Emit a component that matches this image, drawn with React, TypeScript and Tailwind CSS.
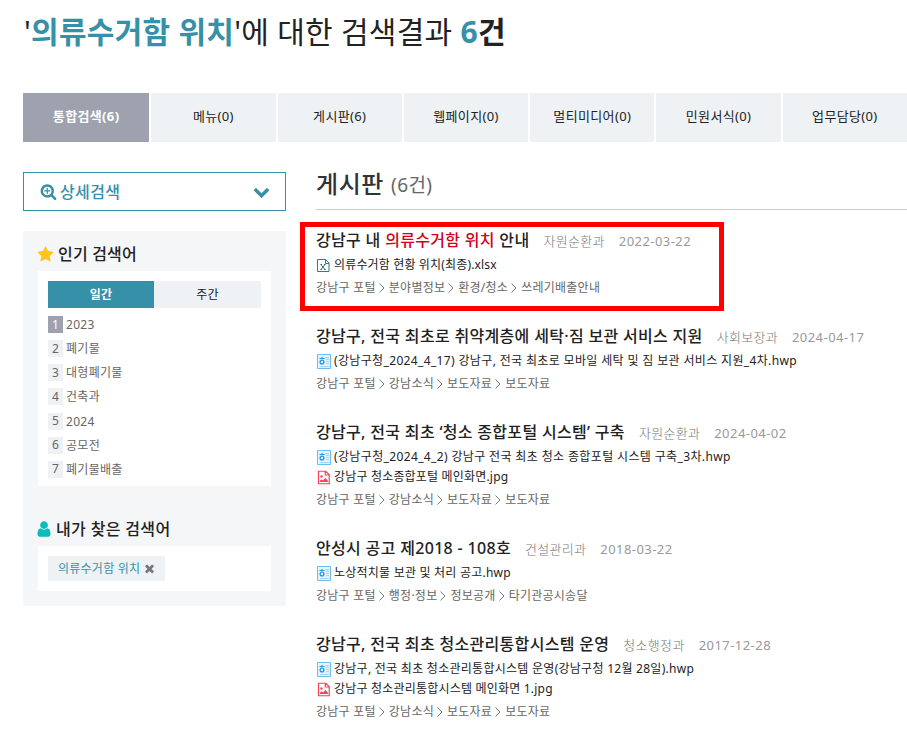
import React, { ReactElement } from 'react'

interface FileProps {
	type: string
	name: string
	tracking: string
}

interface ResultProps {
	title: ReactElement | string
	dept: string
	date: string
	files: FileProps[]
	path: string[]
}

const tabs = ['통합검색(6)', '메뉴(0)', '게시판(6)', '웹페이지(0)', '멀티미디어(0)', '민원서식(0)', '업무담당(0)']

const keywords = ['2023', '폐기물', '대형폐기물', '건축과', '2024', '공모전', '폐기물배출']

const results: ResultProps[] = [
	{
		title: <>강남구 내 <span className="text-[#d0021b]">의류수거함 위치</span> 안내</>,
		dept: '자원순환과',
		date: '2022-03-22',
		files: [{ type: 'xlsx', name: '의류수거함 현황 위치(최종).xlsx', tracking: 'tracking-[0.15px]' }],
		path: ['강남구 포털', '분야별정보', '환경/청소', '쓰레기배출안내'],
	},
	{
		title: '강남구, 전국 최초로 취약계층에 세탁·짐 보관 서비스 지원',
		dept: '사회보장과',
		date: '2024-04-17',
		files: [
			{
				type: 'hwp',
				name: '(강남구청_2024_4_17) 강남구, 전국 최초로 모바일 세탁 및 짐 보관 서비스 지원_4차.hwp',
				tracking: 'tracking-[0.35px]',
			},
		],
		path: ['강남구 포털', '강남소식', '보도자료', '보도자료'],
	},
	{
		title: '강남구, 전국 최초 ‘청소 종합포털 시스템’ 구축',
		dept: '자원순환과',
		date: '2024-04-02',
		files: [
			{
				type: 'hwp',
				name: '(강남구청_2024_4_2) 강남구 전국 최초 청소 종합포털 시스템 구축_3차.hwp',
				tracking: 'tracking-[0.36px]',
			},
			{ type: 'jpg', name: '강남구 청소종합포털 메인화면.jpg', tracking: 'tracking-[0.18px]' },
		],
		path: ['강남구 포털', '강남소식', '보도자료', '보도자료'],
	},
	{
		title: '안성시 공고 제2018 - 108호',
		dept: '건설관리과',
		date: '2018-03-22',
		files: [{ type: 'hwp', name: '노상적치물 보관 및 처리 공고.hwp', tracking: 'tracking-[0.22px]' }],
		path: ['강남구 포털', '행정·정보', '정보공개', '타기관공시송달'],
	},
	{
		title: '강남구, 전국 최초 청소관리통합시스템 운영',
		dept: '청소행정과',
		date: '2017-12-28',
		files: [
			{
				type: 'hwp',
				name: '강남구, 전국 최초 청소관리통합시스템 운영(강남구청 12월 28일).hwp',
				tracking: 'tracking-[0.27px]',
			},
			{ type: 'jpg', name: '강남구 청소관리통합시스템 메인화면 1.jpg', tracking: 'tracking-[0.2px]' },
		],
		path: ['강남구 포털', '강남소식', '보도자료', '보도자료'],
	},
]

const icons = {
	star: 'M1728 647q0 22-26 48l-363 354 86 500q1 7 1 20 0 21-10.500 35.500t-30.500 14.500q-19 0-40-12l-449-236-449 236q-22 12-40 12-21 0-31.500-14.500t-10.500-35.500q0-6 2-20l86-500-364-354q-25-27-25-48 0-37 56-46l502-73 225-455q19-41 49-41t49 41l225 455 502 73q56 9 56 46z',
	user: 'M1536 1399q0 109-62.500 187t-150.500 78h-854q-88 0-150.500-78t-62.500-187q0-85 8.500-160.500t31.500-152 58.500-131 94-89 134.500-34.500q131 128 313 128t313-128q76 0 134.500 34.500t94 89 58.500 131 31.500 152 8.500 160.500zm-256-887q0 159-112.500 271.500t-271.500 112.500-271.500-112.500-112.500-271.500 112.500-271.500 271.500-112.500 271.500 112.500 112.500 271.500z',
	down: 'M1683 808l-742 741q-19 19-45 19t-45-19l-742-741q-19-19-19-45.500t19-45.500l166-165q19-19 45-19t45 19l531 531 531-531q19-19 45-19t45 19l166 165q19 19 19 45.500t-19 45.500z',
	times: 'M1490 1322q0 40-28 68l-136 136q-28 28-68 28t-68-28l-294-294-294 294q-28 28-68 28t-68-28l-136-136q-28-28-28-68t28-68l294-294-294-294q-28-28-28-68t28-68l136-136q28-28 68-28t68 28l294 294 294-294q28-28 68-28t68 28l136 136q28 28 28 68t-28 68l-294 294 294 294q28 28 28 68z',
	searchPlus: 'M1088 800v64q0 13-9.500 22.500t-22.500 9.500h-224v224q0 13-9.500 22.500t-22.500 9.500h-64q-13 0-22.500-9.500t-9.500-22.500v-224h-224q-13 0-22.500-9.500t-9.500-22.500v-64q0-13 9.500-22.500t22.500-9.500h224v-224q0-13 9.500-22.500t22.500-9.500h64q13 0 22.500 9.500t9.500 22.500v224h224q13 0 22.500 9.500t9.500 22.500zm128 32q0-185-131.500-316.500t-316.500-131.500-316.500 131.500-131.500 316.500 131.500 316.500 316.500 131.500 316.500-131.500 131.500-316.500zm512 832q0 53-37.500 90.500t-90.500 37.500q-54 0-90-38l-343-342q-179 124-399 124-143 0-273.500-55.500t-225-150-150-225-55.500-273.500 55.500-273.500 150-225 225-150 273.500-55.500 273.500 55.500 225 150 150 225 55.500 273.500q0 220-124 399l343 343q37 37 37 90z',
}

function Icon({ path, className }: { path: string; className: string }): ReactElement {
	return (
		<svg viewBox="0 0 1792 1792" fill="currentColor" className={`shrink-0 ${className}`}>
			<path d={path} />
		</svg>
	)
}

function FileIcon({ type }: { type: string }): ReactElement {
	if (type === 'xlsx') {
		return (
			<svg viewBox="0 0 14 15" fill="none" className="h-[15px] w-[14px] shrink-0">
				<path d="M.500 1.500h8l3.500 3.500v8.500H.500z M8.500 1.500v4h3.500" stroke="#2f7f74" />
				<path d="M4 6.500l4 5M8 6.500l-4 5M3.500 6.500h1.500M7 6.500h1.500M3.500 11.500h1.500M7 11.500h1.500" stroke="#2d6068" strokeWidth="0.900" />
			</svg>
		)
	}
	if (type === 'hwp') {
		return (
			<svg viewBox="0 0 14 15" fill="none" className="h-[15px] w-[14px] shrink-0">
				<path d="M.5.5h13v14H.5z" fill="#e3f3fc" stroke="#6cbfec" />
				<path d="M8.500 3.500h3.500M9 5.500h3M9 7.500h3M9 9.500h3M3 12.500h9" stroke="#a5d7f4" />
				<path d="M2.500 4.500h5M5 2.800v1.700" stroke="#2a93da" />
				<circle cx="5" cy="8" r="1.900" stroke="#2a93da" strokeWidth="1.300" />
			</svg>
		)
	}
	return (
		<svg viewBox="0 0 14 15" fill="none" className="h-[15px] w-[14px] shrink-0">
			<path d="M1.500 1.250H8.750l3.500 3.500v9H1.500z M8.250 1.500V5h4" stroke="#fa405f" strokeWidth="1.200" />
			<circle cx="4.500" cy="6.500" r="1.200" fill="#fa405f" />
			<path d="M3 12V10.500l1.500-1 1.500 1 2.300-2.500 2.500 2.500V12z" fill="#fa405f" />
		</svg>
	)
}

function Result(props: ResultProps): ReactElement {
	const { title, dept, date, files, path } = props

	return (
		<li className="pb-[22px]">
			<div className="mb-px flex h-7 items-center">
				<h3 className="text-base font-medium tracking-[0.32px] text-[#222]">{title}</h3>
				<span className="ml-[14px] pt-[3px] text-[13px] font-light tracking-[0.3px] text-[#777]">{dept}</span>
				<span className="ml-[14px] pt-[3px] text-[13px] tracking-[0.45px] text-[#999]">{date}</span>
			</div>
			{files.map((file) => (
				<div key={file.name} className="flex h-5 items-center gap-[3px] pl-px text-xs text-[#222]">
					<FileIcon type={file.type} />
					<span className={file.tracking}>{file.name}</span>
				</div>
			))}
			<div className="flex h-[25px] items-center text-xs tracking-[0.25px] text-[#666]">
				{path.map((step, i) => (
					<React.Fragment key={i}>
						{i > 0 && (
							<svg viewBox="0 0 6 10" fill="none" stroke="#777" className="mr-[4px] ml-[3px] h-[10px] w-[6px]">
								<path d="M.5.5L5 5 .5 9.500" />
							</svg>
						)}
						<span>{step}</span>
					</React.Fragment>
				))}
			</div>
		</li>
	)
}

export default function App(): ReactElement {
	return (
		<div className="h-[737px] w-[907px] overflow-hidden bg-white pl-[23px] font-['Noto_Sans','Noto_Sans_CJK_KR',sans-serif] whitespace-nowrap text-[#222]">
			<h1 className="flex h-[93px] items-start pt-[10px] pl-px text-[30px] leading-[44px] tracking-[0.27px]">
				<span className="whitespace-pre">
					'<b className="text-[#3690a7]">의류수거함 위치</b>'에 대한 검색결과 <b className="text-[#3690a7]">6</b><b>건</b>
				</span>
			</h1>

			<ul className="grid h-[49px] grid-cols-7 text-[13px] tracking-[0.35px]">
				{tabs.map((tab, i) => (
					<li
						key={tab}
						className={`flex items-center justify-center pb-px ${i === 0 ? 'bg-[#9ea2ae] font-bold text-white' : 'border-l-2 border-white bg-[#eef2f5]'}`}
					>
						{tab}
					</li>
				))}
			</ul>

			<div className="flex gap-[30px] pt-[30px]">
				<aside className="w-[263px] shrink-0 tracking-[0.2px]">
					<button className="flex h-[39px] w-full items-center border border-[#3690a7] px-4 text-base text-[#3690a7]">
						<Icon path={icons.searchPlus} className="mr-[3px] h-[17px] w-[17px]" />
						<span className="font-medium tracking-[0.4px]">상세검색</span>
						<Icon path={icons.down} className="-mr-px ml-auto h-[17px] w-[17px]" />
					</button>

					<div className="mt-5 h-[375px] bg-[#f4f6f8] px-[15px] pt-2">
						<h2 className="flex h-8 items-center pb-[2px] text-base font-medium">
							<Icon path={icons.star} className="mr-[4px] -ml-px h-[17px] w-[17px] text-[#ffc31f]" />
							인기 검색어
						</h2>
						<div className="h-[215px] bg-white p-[10px] text-xs text-[#666]">
							<div className="grid h-[27px] grid-cols-[106px_107px]">
								<div className="flex items-center justify-center bg-[#3690a7] font-bold text-white">일간</div>
								<div className="flex items-center justify-center bg-[#eef2f5] text-[#222]">주간</div>
							</div>
							<ol className="pt-2">
								{keywords.map((word, i) => (
									<li key={word} className="flex h-[24.150px] items-start">
										<span
											className={`mr-[3px] flex h-[17px] w-[15px] items-center justify-center ${i === 0 ? 'bg-[#9ea2ae] text-white' : 'bg-[#eef2f5]'}`}
										>
											{i + 1}
										</span>
										<span className="leading-[17px] tracking-[0.3px]">{word}</span>
									</li>
								))}
							</ol>
						</div>

						<h2 className="mt-7 flex h-8 items-center pb-[2px] text-base font-medium tracking-[0.35px]">
							<Icon path={icons.user} className="mr-[3px] -ml-[3px] h-[18px] w-[18px] text-[#0bbcbc]" />
							내가 찾은 검색어
						</h2>
						<div className="flex h-[45px] items-start bg-white p-[10px]">
							<span className="flex h-[25px] w-[117px] items-center bg-[#eef2f5] pl-[10px] text-xs tracking-[0.25px] text-[#3690a7]">
								의류수거함 위치
								<Icon path={icons.times} className="mb-px ml-[3px] h-[13px] w-[13px] text-[#777]" />
							</span>
						</div>
					</div>
				</aside>

				<main className="relative min-w-0 flex-1">
					<h2 className="flex h-[38px] items-start border-b border-[#ccc] text-2xl leading-6 text-[#333]">
						<span className="font-medium tracking-[0.6px]">게시판</span>
						<span className="ml-[7px] pt-px text-[19px] tracking-[0.4px] text-[#666]">(6건)</span>
					</h2>
					<ul className="pt-4">
						{results.map((result) => (
							<Result key={result.date} {...result} />
						))}
					</ul>
					{/* highlight around the first result */}
					<div className="absolute top-[50px] -left-4 h-[89px] w-[424px] border-5 border-[#fe0000]" />
				</main>
			</div>
		</div>
	)
}
